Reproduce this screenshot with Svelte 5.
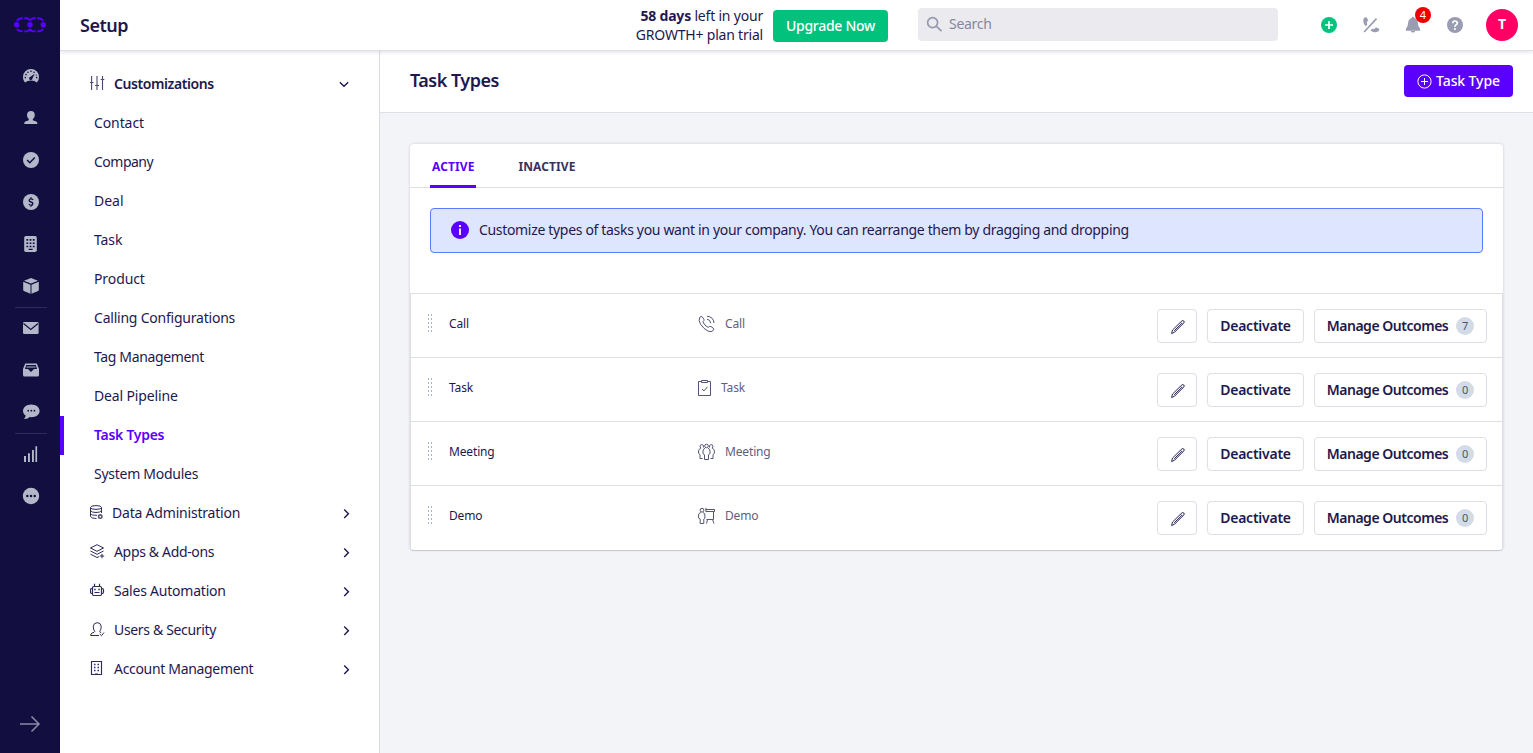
<script>
  const children = [
    { label: 'Contact', tracking: -0.1 },
    { label: 'Company', tracking: -0.5 },
    { label: 'Deal', tracking: 0 },
    { label: 'Task', tracking: -0.1 },
    { label: 'Product', tracking: -0.1 },
    { label: 'Calling Configurations', tracking: -0.22 },
    { label: 'Tag Management', tracking: -0.36 },
    { label: 'Deal Pipeline', tracking: -0.15 },
    { label: 'Task Types', tracking: -0.28 },
    { label: 'System Modules', tracking: -0.27 }
  ];
  const groups = [
    { icon: 'data', label: 'Data Administration', tracking: -0.2 },
    { icon: 'apps', label: 'Apps & Add-ons', tracking: -0.34 },
    { icon: 'robot', label: 'Sales Automation', tracking: -0.22 },
    { icon: 'user', label: 'Users & Security', tracking: -0.34 },
    { icon: 'building', label: 'Account Management', tracking: -0.32 }
  ];
  const rail = ['gauge', 'person', 'check', 'dollar', 'company', 'box', 'mail', 'inbox', 'chat', 'bars', 'more'];
  const rows = [
    { name: 'Call', count: 7 },
    { name: 'Task', count: 0 },
    { name: 'Meeting', count: 0 },
    { name: 'Demo', count: 0 }
  ];
</script>

<div class="app">
  <nav class="rail">
    <svg class="logo" width="32" height="16" viewBox="0 0 32 16" fill="none" stroke="#5a00ff" stroke-width="1.9">
      <g fill="#5a00ff" stroke="none"><circle cx="2.7" cy="7.8" r="2.7" /><circle cx="16" cy="7.8" r="2.7" /><circle cx="29.3" cy="7.8" r="2.7" /></g>
      <path d="M3 3.800Q4.200 1.300 8.800 1.200M10.300 1.200h2.400q1.200.1 3.300 1.900 2.100-1.800 3.300-1.900h2.400M23.200 1.200q4.600.1 5.800 2.600M3 11.900q1.200 2.400 5.800 2.500M10.300 14.400h2.400q1.200-.1 3.300-1.900 2.100 1.800 3.300 1.900h2.400M23.200 14.400q4.600-.1 5.800-2.500" />
    </svg>
    <div class="rail-items">
      {#each rail as icon}
        <div class="rail-item" class:ruled={icon === 'box' || icon === 'chat'}>
          <svg width="18" height="18" viewBox="0 0 18 18" fill="#b4b7c9">
            {#if icon === 'gauge'}
              <path d="M9 2a8 8 0 0 0-8 8c0 2.200.7 4 2.100 5.600l2.500-1.500q3.400-1.300 6.800 0l2.500 1.500A8.200 8.200 0 0 0 17 10a8 8 0 0 0-8-8z" />
              <g fill="#120f40"><circle cx="3.300" cy="10.600" r=".8" /><circle cx="4" cy="7.600" r=".8" /><circle cx="6" cy="5.300" r=".8" /><circle cx="9" cy="4.300" r=".8" /><circle cx="12" cy="5.300" r=".8" /><circle cx="14.700" cy="10.600" r=".8" /><circle cx="14.300" cy="8" r=".6" /><path d="m12.700 6.800-2.200 4.400a1.700 1.700 0 1 1-2-1.500z" /></g>
            {:else if icon === 'person'}
              <path d="M9 2c-2.400 0-4 1.600-4 4 0 1.700.7 3.200 1.800 4.100v1.200l-3.400 1.300q-1.200.5-1.200 2.400h13.200q0-1.900-1.200-2.400l-3.400-1.300v-1.200C12 9.200 12.800 7.700 12.800 6 12.800 3.600 11.400 2 9 2z" />
            {:else if icon === 'check'}
              <circle cx="9" cy="9" r="8" /><path d="m5.200 9 2.600 2.700 5-5.200" fill="none" stroke="#120f40" stroke-width="1.500" />
            {:else if icon === 'dollar'}
              <circle cx="9" cy="9" r="8" /><path d="M11 7q-.3-1.200-2-1.200T7.100 7.400Q7.200 8.600 9 9t1.900 1.600Q10.800 12.200 9 12.200T7 11M9 4.300v1.500m0 6.400v1.600" fill="none" stroke="#120f40" stroke-width="1.300" />
            {:else if icon === 'company'}
              <rect x="2.200" y="1" width="12.600" height="16" rx="1.800" />
              <g fill="#120f40"><path d="M4.400 4h1.800v1.700H4.400zM7.600 4h1.800v1.700H7.600zM10.800 4h1.800v1.700h-1.800zM4.400 7.400h1.800v1.700H4.400zM7.600 7.400h1.800v1.700H7.600zM10.800 7.400h1.800v1.700h-1.800zM4.400 10.800h1.800v1.500H4.400zM7.600 10.800h1.800v1.500H7.600zM10.800 10.800h1.800v1.500h-1.800zM6.600 13.800h4V15h-4z" /></g>
            {:else if icon === 'box'}
              <path d="M9 1l7 2.700-7 2.900-7-2.900zM1.200 4.800l7.300 3v9l-6.600-2.900q-.7-.3-.7-1zM16.800 4.800l-7.300 3v9l6.600-2.900q.7-.3.7-1z" />
            {:else if icon === 'mail'}
              <rect x="1" y="3" width="15.600" height="12" rx="1.200" /><path d="m1.500 4.500 7.300 6 7.300-6" fill="none" stroke="#120f40" stroke-width="1.200" />
            {:else if icon === 'inbox'}
              <path d="M3.200 2.500h11.600L17 8v6q0 1.500-1.500 1.500h-13Q1 15.500 1 14V8z" /><path d="M4.200 4h9.600l1.200 4H12l-3 3-3-3H3z" fill="#120f40" /><path d="M4.500 6h9" stroke="#b4b7c9" stroke-width="1" />
            {:else if icon === 'chat'}
              <path d="M9.300 1.500C4.700 1.500 1 4.300 1 8c0 1.900 1 3.500 2.700 4.600-.2 1.500-1 2.500-1.600 3.400 2 .3 4.100-.5 5.500-1.900 5.800.6 10-2.200 10-6.100 0-3.700-3.700-6.500-8.300-6.500z" /><g fill="#120f40"><circle cx="6.200" cy="7.700" r=".9" /><circle cx="9.300" cy="7.700" r=".9" /><circle cx="12.400" cy="7.700" r=".9" /></g>
            {:else if icon === 'bars'}
              <path d="M2 11h2v6H2zM6 8.200h1.900V17H6zM10 5h1.900v12H10zM13.400 1.200h1.700V17h-1.700z" />
            {:else}
              <circle cx="9" cy="9" r="8.200" /><g fill="#120f40"><circle cx="5.300" cy="9" r="1.250" /><circle cx="9" cy="9" r="1.250" /><circle cx="12.700" cy="9" r="1.250" /></g>
            {/if}
          </svg>
        </div>
      {/each}
    </div>
    <svg class="expand" width="22" height="18" viewBox="0 0 22 18" fill="none" stroke="#8b8ba6" stroke-width="1.500"><path d="M1 9h19M12.500 1.500 20 9l-7.500 7.500" /></svg>
  </nav>

  <div class="main">
    <header>
      <h1>Setup</h1>
      <div class="trial"><span class="line"><b>58 days</b> left in your</span><span class="line plan">GROWTH+ plan trial</span></div>
      <button class="upgrade">Upgrade Now</button>
      <div class="search">
        <svg width="17" height="17" viewBox="0 0 17 17" fill="none" stroke="#9799b0" stroke-width="1.700"><circle cx="6.600" cy="6.600" r="5" /><path d="m10.400 10.400 5.200 4.800" /></svg>
        <span>Search</span>
      </div>
      <div class="tools">
        <svg width="18" height="18" viewBox="0 0 18 18"><circle cx="9" cy="9" r="8" fill="#00c47e" /><path d="M9 5v8M5 9h8" stroke="#fff" stroke-width="1.700" /></svg>
        <svg width="18" height="18" viewBox="0 0 18 18" fill="#9a9db2"><path d="M1.800 2.200Q3 .9 4.600 1.500l1.500 2.600q0 1.200-1.300 1.800l.5 2.500-1.600 1.800C1.600 8.200.6 4.600 1.800 2.200zM8.500 14.400l1.600-1.700 2.500.2q.6-1.400 1.800-1.400l2.300.9q1.200 1 .1 2.700c-2.200 1.800-5.900 1.300-8.300-.7z" /><path d="M2.100 16 14.500 2.600" fill="none" stroke="#9a9db2" stroke-width="1.700" /></svg>
        <div class="bell">
          <svg width="18" height="18" viewBox="0 0 18 18" fill="#9a9db2"><path d="M9 .8q1.100 0 1.300 1.300Q13.700 3.200 13.900 7q.1 4 2.200 5.700v2H1.900v-2Q4 11 4.100 7q.2-3.800 3.600-4.900Q7.900.8 9 .8zM6.800 14.900q.3 1.700 2.200 1.700t2.200-1.700" /></svg>
          <span class="badge">4</span>
        </div>
        <svg width="18" height="18" viewBox="0 0 18 18"><circle cx="9" cy="9" r="8" fill="#9a9db2" /><path d="M6.700 7.200q.1-2.200 2.300-2.200t2.300 2q0 1.200-1.200 1.800T9 10.900" fill="none" stroke="#fff" stroke-width="1.700" /><circle cx="9" cy="13" r="1.100" fill="#fff" /></svg>
      </div>
      <div class="avatar">T</div>
    </header>

    <div class="body">
      <aside>
        <div class="item head">
          <svg width="15" height="15" viewBox="0 0 15 15" fill="none" stroke="#4c4873" stroke-width="1.100"><path d="M1.600 0v14M7 0v14M12.500 0v14M0 6.500h3.400M5 9.500h4M10.700 3.500h3.600" /></svg>
          <b>Customizations</b>
          <svg class="caret" width="16" height="16" viewBox="0 0 16 16"><path d="m3.800 6.300 4.200 4 4.200-4" /></svg>
        </div>
        {#each children as child}
          <div class="item child" class:active={child.label === 'Task Types'} style:letter-spacing="{child.tracking}px">{child.label}</div>
        {/each}
        {#each groups as group}
          <div class="item head {group.icon}">
            <svg width="15" height="15" viewBox="0 0 15 15" fill="none" stroke="#2f2b5b" stroke-width="1">
              {#if group.icon === 'data'}
                <ellipse cx="6" cy="2.500" rx="5.500" ry="1.900" /><path d="M.5 2.500v9q1 2 6 2M.5 5.500q1 2 5.500 2t5.500-2v-3M.5 8.500q1 2 6.500 1.800M11.500 5.500v2.500" /><circle cx="10.200" cy="11.600" r="1.700" stroke-width="1.600" stroke="#5a5779" />
              {:else if group.icon === 'apps'}
                <path d="m.5 4 6.500-3.300L13.500 4 7 7.300zM.5 7l6.500 3.300L13.500 7M.5 10.200 7 13.500l2.200-.9M12 9.800v4.400M9.800 12h4.400" />
              {:else if group.icon === 'robot'}
                <path d="M3.700 3.500h6.600q1.200 0 1.200 1.200v6.600q0 1.200-1.200 1.200H3.700q-1.200 0-1.200-1.200V4.700q0-1.200 1.200-1.200zM4.500 3.500V.8M9.500 3.500V.8M2.500 5.500h-.8Q.5 5.500.5 7v2q0 1.500 1.200 1.500h.8M11.500 5.500h.8q1.200 0 1.200 1.500v2q0 1.500-1.200 1.500h-.8M4.500 9.500h5" stroke-width="1.200" /><path d="M4.200 6.500h1.500M8.300 6.500h1.500" stroke-width="1.500" />
              {:else if group.icon === 'user'}
                <path d="M9 13.500H.6q0-2 1.500-2.500 2.600-.7 2.600-1.500Q3 7.500 3.300 4.200q.4-3.400 3.900-3.500t4 3.500Q11.300 7.500 9.700 9.500q0 .8 1.500 1.200M9.700 12l1.800 1.700 2.500-3.200" />
              {:else}
                <path d="M1.500.5h10v13h-10zM5 13h3" stroke-width="1.150" /><path d="M4 3.500h1.500M7.500 3.500H9M4 6.500h1.500M7.500 6.500H9M4 9.500h1.500M7.500 9.500H9" stroke-width="1.400" />
              {/if}
            </svg>
            <span style:letter-spacing="{group.tracking}px">{group.label}</span>
            <svg class="caret" width="16" height="16" viewBox="0 0 16 16"><path d="m6.200 4.500 4.200 4.200-4.200 4.200" /></svg>
          </div>
        {/each}
      </aside>

      <main>
        <div class="title-bar">
          <h2>Task Types</h2>
          <button class="add">
            <svg width="15" height="15" viewBox="0 0 15 15" fill="none" stroke="#fff"><circle cx="7.500" cy="7.500" r="6.600" /><path d="M7.500 4v7M4 7.500h7" /></svg>
            <span>Task Type</span>
          </button>
        </div>
        <section class="card">
          <div class="tabs"><div class="tab on">ACTIVE</div><div class="tab">INACTIVE</div></div>
          <div class="info">
            <svg width="18" height="18" viewBox="0 0 18 18"><circle cx="9" cy="9" r="9" fill="#5a00ff" /><path d="M9 7.500V14M9 4v2" stroke="#fff" stroke-width="1.800" /></svg>
            <span>Customize types of tasks you want in your company. You can rearrange them by dragging and dropping</span>
          </div>
          <div class="rows">
            {#each rows as row}
              <div class="row">
                <svg class="grip" width="5" height="18" viewBox="0 0 5 18"><path d="M.5 0v18M3.500 0v18" stroke="#a9b5c4" stroke-width="1" stroke-dasharray="2 2" /></svg>
                <div class="name">{row.name}</div>
                <div class="kind">
                  <svg width={row.name === 'Task' ? 13 : 17} height="18" viewBox="0 0 {row.name === 'Task' ? 13 : 17} 18" fill="none" stroke="#535477" stroke-width="1">
                    {#if row.name === 'Call'}
                      <path d="M1.800 2.200q1.300-1.500 2.600-.1l1.500 2.200q.6 1.100-.8 2.200-.2 1.200 1.900 3.500t3.600 2.200q1.100-1.300 2.300-.7l2.300 1.600q1.200 1 .1 2.200-1.900 2.300-5.200.8-4.300-2-7.600-6.900-2.400-3.900-.7-7zM9 4.200q3.300.3 3.700 4M9 1.200q6.400.5 7 6.800" />
                    {:else if row.name === 'Task'}
                      <path d="M3.500 2.500h-3v14h12v-14h-3M3.500 1.500h6v2h-6zM4 10l2 1.900 3.400-4" />
                    {:else if row.name === 'Meeting'}
                      <circle cx="8.500" cy="3" r="1.800" /><path d="M7 5.300q-2 .5-2 2.700v2.700l1.500 1v4.800h4v-4.800l1.500-1V8q0-2.200-2-2.700" /><path d="M5.500 4.500q.6-2.600-1.700-3-2 .2-1.700 2.200l.7 1.500Q.6 6.200.6 8v2.300l1.400 1.200v4h2.500M11.500 4.500q-.6-2.600 1.700-3 2 .2 1.700 2.200l-.7 1.500q2.200 1 2.200 2.800v2.300L15 11.500v4h-2.500" />
                    {:else}
                      <circle cx="4" cy="3.200" r="1.900" /><path d="M2.800 5.500Q.6 6 .6 8v3l1.600 1v4.500h3.600V12l1.100-1V8q0-2-2-2.500M7.500 2.500h9v2h-9M15.500 4.500v8H8.500M8 1v3M9.500 12.500l-1 4M14.500 12.500l1.500 4" />
                    {/if}
                  </svg>
                  <span>{row.name}</span>
                </div>
                <div class="actions">
                  <button class="edit" aria-label="Edit"><svg width="16" height="16" viewBox="0 0 16 16" fill="none" stroke="#282653" stroke-width="1"><path d="m1.600 14.600.9-3.600 9.400-9.100q1-.8 1.900.1t.1 1.900L4.700 13zM10.500 3.300l2 2M4.200 11.800l7.200-7" /></svg></button>
                  <button class="off">Deactivate</button>
                  <button class="manage"><span>Manage Outcomes</span><span class="count">{row.count}</span></button>
                </div>
              </div>
            {/each}
          </div>
        </section>
      </main>
    </div>
  </div>
</div>

<style>
  :global(body) { overflow: hidden; }
  .app { display: flex; height: 753px; font-family: 'Noto Sans', sans-serif; font-size: 14px; color: #1e184f; }
  * { box-sizing: border-box; }
  svg { display: block; flex: none; }
  button { font: inherit; border: 0; padding: 0; white-space: nowrap; }
  .rail { width: 60px; flex: none; background: #120f40; display: flex; flex-direction: column; }
  .logo { margin: 17px 0 0 14px; }
  .rail-items { margin-top: 22px; }
  .rail-item { height: 42px; display: flex; align-items: center; padding-left: 22px; }
  .rail-item.ruled + .rail-item { background: linear-gradient(#2e2b57, #2e2b57) 15px 0 / 32px 1px no-repeat; }
  .expand { margin: auto 0 20px 19px; }
  .main { flex: 1; display: flex; flex-direction: column; min-width: 0; }
  header { height: 51px; flex: none; display: flex; align-items: center; border-bottom: 1px solid #dfdfe9; box-shadow: 0 1px 4px rgba(30, 24, 79, .14); background: #fff; z-index: 1; padding: 0 15px 0 20px; }
  h1 { font-size: 18px; font-weight: 600; margin: 0; width: 500px; letter-spacing: -.5px; }
  .trial { width: 183px; text-align: right; line-height: 19px; display: flex; flex-direction: column; margin-bottom: 1px; white-space: nowrap; }
  .trial .line { letter-spacing: -.2px; }
  .upgrade { width: 115px; height: 32px; margin: 1px 0 0 10px; border-radius: 4px; background: #00c27c; color: #fff; font-weight: 500; letter-spacing: -.27px; }
  .search { width: 360px; height: 33px; margin: 0 0 1px 30px; border-radius: 4px; background: #ebeaef; color: #85879f; display: flex; align-items: center; padding: 0 8px 2px; gap: 6px; letter-spacing: -.3px; }
  .search svg { margin-top: 2px; }
  .tools { display: flex; gap: 24px; margin-left: 42px; }
  .bell { position: relative; }
  .badge { position: absolute; top: -9px; left: 11px; width: 16px; height: 16px; border-radius: 50%; background: #ee0000; color: #fff; font-size: 11px; line-height: 15px; text-align: center; }
  .avatar { margin-left: auto; width: 32px; height: 32px; border-radius: 50%; background: #ff0065; color: #fff; font-weight: 700; line-height: 30px; text-align: center; }
  .body { display: flex; flex: 1; min-height: 0; }
  aside { width: 320px; flex: none; border-right: 1px solid #dcdce0; padding-top: 14px; background: #fff; }
  .item { height: 39px; display: flex; align-items: center; white-space: nowrap; }
  .child { padding-left: 34px; padding-bottom: 3px; }
  .child.active { border-left: 4px solid #5a00ff; padding-left: 30px; color: #5a00ff; font-weight: 600; }
  .head { padding: 0 25px 3px 30px; gap: 9px; }
  .head.data { gap: 7px; }
  .caret { margin: 2px 0 0 auto; fill: none; stroke: #1e184f; stroke-width: 1.4; }
  .head b { font-weight: 600; letter-spacing: -.42px; }
  .head:first-child .caret { margin-right: 2px; }
  main { flex: 1; min-width: 0; background: #f3f4f7; }
  .title-bar { height: 62px; background: #fff; border-bottom: 1px solid #dedfe7; display: flex; align-items: center; justify-content: space-between; padding: 0 20px 1px 30px; }
  h2 { font-size: 18px; font-weight: 600; margin: -2px 0 0; letter-spacing: -.5px; }
  .add { width: 109px; height: 32px; background: #5a00ff; color: #fff; border-radius: 4px; display: flex; align-items: center; justify-content: center; gap: 4px; font-weight: 500; letter-spacing: -.1px; }
  .add span { margin-top: -2px; }
  .card { margin: 31px 30px 0; height: 406px; background: #fff; border-radius: 4px; box-shadow: 0 0 3px rgba(30, 24, 79, .18), 0 1px 0 rgba(30, 24, 79, .14); }
  .tabs { height: 44px; border-bottom: 1px solid #dddfe4; display: flex; padding-left: 20px; gap: 40px; font-size: 12px; font-weight: 700; }
  .tab { height: 44px; padding: 0 2px; line-height: 46px; color: #37325f; letter-spacing: .1px; }
  .on { color: #5a00ff; border-bottom: 3px solid #5a00ff; }
  .info { margin: 20px; height: 45px; border: 1px solid #587bff; border-radius: 4px; background: #dee5ff; display: flex; align-items: center; gap: 10px; padding: 0 20px 1px; white-space: nowrap; letter-spacing: -.325px; }
  .info span { margin-top: -2px; }
  .rows { margin-top: 40px; border: 1px solid #dddfe4; border-bottom: 0; }
  .row { height: 64px; border-bottom: 1px solid #dddfe4; display: flex; font-size: 12px; padding: 15px 15px 0 17px; letter-spacing: -.15px; }
  .row:last-child { border-bottom: 0; }
  .grip { margin-top: 5px; }
  .name { margin-left: 16px; width: 249px; line-height: 29px; }
  .kind { display: flex; gap: 10px; line-height: 29px; color: #5f607f; }
  .kind svg { margin-top: 6px; }
  .actions { margin-left: auto; display: flex; gap: 10px; }
  .actions button { height: 34px; border: 1px solid #dedfe6; border-radius: 4px; background: #fff; color: #1e184f; font-size: 14px; font-weight: 600; display: flex; align-items: center; justify-content: center; }
  .actions .edit svg { margin: 2px 0 0 1px; }
  .actions .off { width: 97px; letter-spacing: -.25px; padding-bottom: 2px; }
  .edit { width: 40px; }
  .manage { width: 173px; gap: 8px; }
  .manage span:first-child { letter-spacing: -.48px; margin-top: -2px; }
  .count { width: 18px; height: 18px; border-radius: 50%; background: #d3dce6; color: #4f5170; font-size: 11px; font-weight: 400; line-height: 18px; text-align: center; letter-spacing: 0; }
</style>
